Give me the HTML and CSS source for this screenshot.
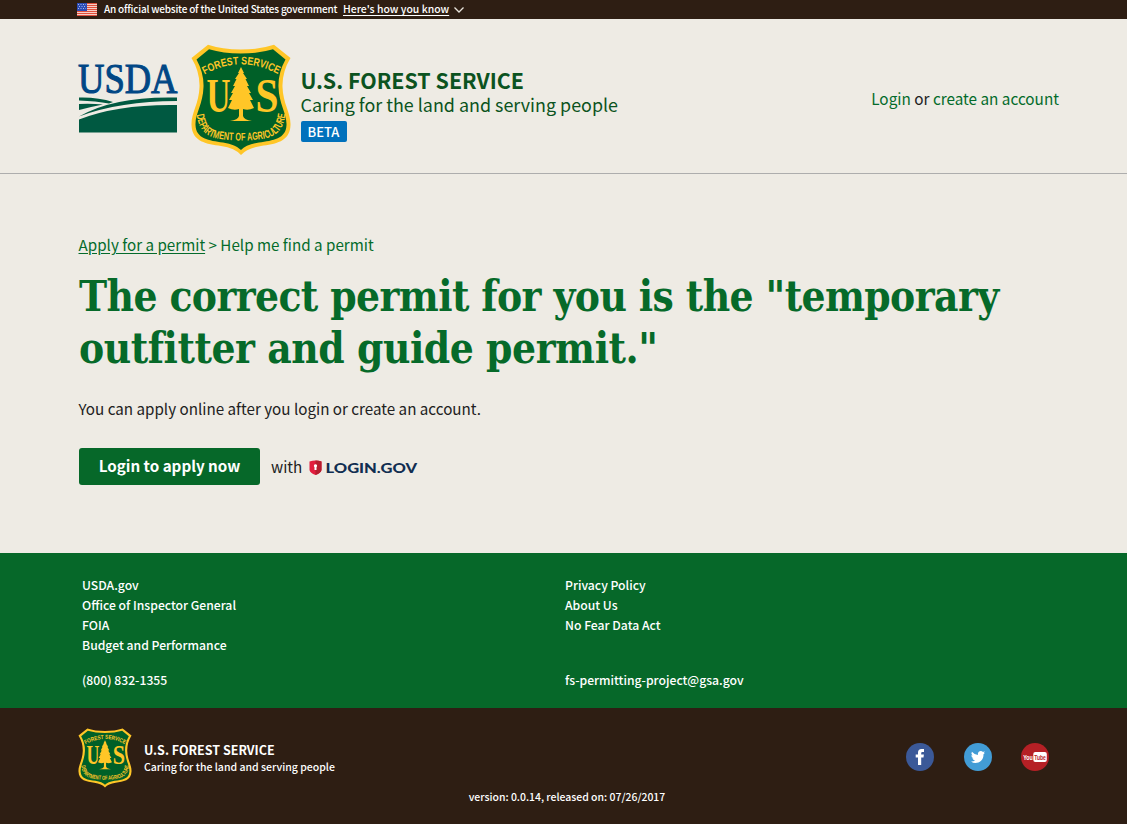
FILE: index.html
```html
<!DOCTYPE html>
<html lang="en">
<head>
<meta charset="utf-8">
<title>U.S. Forest Service permits</title>
<link rel="stylesheet" href="styles.css">
</head>
<body>
<svg class="defs" aria-hidden="true">
  <defs>
    <path id="arc-top" d="M13.500 30.500Q50 10 88.500 31"/>
    <path id="arc-bottom" d="M5.500 70.500Q8 91 26 94.500Q38 96.500 50 96.500Q62 96.500 74 94.500Q92 91 94.500 70.500"/>
    <symbol id="shield" viewBox="0 0 100 112">
      <path fill="#ffc627" d="M17 .8Q31 5.500 50 5.500Q69 5.500 83 .8L99.500 14Q91 28 91.500 43C92 60 100 69 99.500 81C99 98 84 100 70 102Q56 104 50 111Q44 104 30 102C16 100 1 98 .5 81C0 69 8 60 8.500 43Q9 28 .5 14Z"/>
      <path fill="#006028" d="M18 5.300Q32 9.500 50 9.500Q68 9.500 82 5.300L94.500 15.500Q87 29 87.500 43C88 60 96 70 95.500 81C95 95 82 96.500 68 98.500Q55 100.500 50 106Q45 100.500 32 98.500C18 96.500 5 95 4.500 81C4 70 12 60 12.500 43Q13 29 5.500 15.500Z"/>
      <g fill="#ffc627">
        <path d="M50 23L53 29L52 29L56 35L54.500 35L58 42L56 42L60 49L58 49L62 56L59 56L63 64Q57 67 52 65V72Q53 76 61 77H39Q47 76 48 72V65Q43 67 37 64L41 56H38L42 49H40L44 42H42L45.500 35H44L48 29H47Z"/>
        <text class="shield-us" x="15.500" y="68" textLength="24" lengthAdjust="spacingAndGlyphs">U</text>
        <text class="shield-us" x="64.500" y="68" textLength="23" lengthAdjust="spacingAndGlyphs">S</text>
        <text class="shield-arc"><textPath href="#arc-top" textLength="77" lengthAdjust="spacingAndGlyphs">FOREST SERVICE</textPath></text>
        <text class="shield-arc"><textPath href="#arc-bottom" textLength="117" lengthAdjust="spacingAndGlyphs">DEPARTMENT OF AGRICULTURE</textPath></text>
      </g>
    </symbol>
  </defs>
</svg>

<div class="banner">
  <svg class="flag" viewBox="0 0 20 13">
    <path fill="#f7cfc6" d="M0 0h20v13H0z"/>
    <path stroke="#e0503c" stroke-width="1.200" d="M0 .5h20M0 2.500h20M0 4.500h20M0 6.500h20M0 8.500h20M0 10.500h20M0 12.500h20"/>
    <path fill="#2b4bb5" d="M0 0h10v8H0z"/>
    <path stroke="#a9b8ea" stroke-dasharray="1 1.500" d="M1 1.500h8M2 3.500h7M1 5.500h8"/>
  </svg>
  <span class="banner-text">An official website of the United States government</span>
  <a class="banner-link">Here's how you know</a>
  <svg class="chevron" viewBox="0 0 12 8"><path d="M1.500 1.500L6 6L10.500 1.500" fill="none" stroke="#e8e4dc" stroke-width="1.300"/></svg>
</div>

<header class="header">
  <svg class="usda" viewBox="0 0 100 70">
    <text class="usda-text" x="0" y="30" textLength="99.500" lengthAdjust="spacingAndGlyphs">USDA</text>
    <g fill="#005941">
      <path d="M1 34.500Q20 34 35 39L31 40.500Q18 38 1 37.500Z"/>
      <path d="M1 41Q14 40.500 25 41.500Q12 44 1 47Z"/>
      <path d="M1 53.500Q36 33 99 34.500V38Q42 38 1 53.500Z"/>
      <path d="M1 56.500Q40 41 99 42V69.500H1Z"/>
    </g>
  </svg>
  <svg class="header-shield"><use href="#shield"/></svg>
  <div class="brand">
    <div class="brand-name">U.S. FOREST SERVICE</div>
    <div class="brand-tag">Caring for the land and serving people</div>
    <span class="beta">BETA</span>
  </div>
  <div class="account"><a>Login</a> or <a>create an account</a></div>
</header>

<main class="main">
  <nav class="crumbs"><a class="crumb-link">Apply for a permit</a> &gt; Help me find a permit</nav>
  <h1 class="title"><span class="title-first">The correct permit for you is the "temporary</span> <span class="title-second">outfitter and guide permit."</span></h1>
  <p class="lead">You can apply online after you login or create an account.</p>
  <div class="actions">
    <a class="button">Login to apply now</a>
    <span class="with">with</span>
    <svg class="login-gov" viewBox="0 0 109 16">
      <path fill="#e21d3e" d="M.5 1.500Q6.500-.5 12.500 1.500V10Q12 13 6.500 15Q1 13 .5 10Z"/>
      <path fill="#b51d2e" d="M6.500.5Q10 .6 12.500 1.500V10Q12 13 6.500 15Z"/>
      <path fill="#fff" d="M6.500 4.200a1.700 1.700 0 0 1 1 3V10h-2V7.200a1.700 1.700 0 0 1 1-3"/>
      <text class="login-gov-text" x="16.500" y="12.500" textLength="91.500" lengthAdjust="spacingAndGlyphs">LOGIN.GOV</text>
    </svg>
  </div>
</main>

<div class="footer-links">
  <div class="footer-col">
    <a>USDA.gov</a><a>Office of Inspector General</a><a>FOIA</a><a>Budget and Performance</a>
    <span class="contact">(800) 832-1355</span>
  </div>
  <div class="footer-col">
    <a>Privacy Policy</a><a>About Us</a><a>No Fear Data Act</a>
    <span class="contact">fs-permitting-project@gsa.gov</span>
  </div>
</div>

<footer class="footer">
  <div class="footer-row">
    <svg class="footer-shield"><use href="#shield"/></svg>
    <div class="footer-brand">
      <div class="footer-name">U.S. FOREST SERVICE</div>
      <div class="footer-tag">Caring for the land and serving people</div>
    </div>
    <div class="social">
      <svg viewBox="0 0 28 28"><circle cx="14" cy="14" r="14" fill="#3b5998"/><path fill="#fff" d="M12 22v-7.500H9.700V11.500H12V9.500Q12 6 15.500 6H18v3h-1.700Q15.200 9 15.200 10v1.500h2.700l-.4 3h-2.300V22z"/></svg>
      <svg viewBox="0 0 28 28"><circle cx="14" cy="14" r="14" fill="#429cd6"/><path fill="#fff" d="M21 9.800l-1.500 1.500C19.800 17 15.500 20 11.500 20Q9 20 7 18.500q2.500.2 4-1.200q-2-.1-2.700-2h1.200Q7.300 14.500 7.300 12.200l1.200.4Q6.600 10.800 7.900 8.800Q10.300 11.700 13.900 11.900C13.300 8.500 17 7 19 9l1.800-.7-1.100 1.600z"/></svg>
      <svg viewBox="0 0 28 28"><circle cx="14" cy="14" r="14" fill="#b52025"/><rect x="12.300" y="9" width="13.500" height="10" rx="2" fill="#fff"/><text class="yt" x="2.200" y="17.200" textLength="9.600" lengthAdjust="spacingAndGlyphs" fill="#fff">You</text><text class="yt" x="13.200" y="17.200" textLength="11.600" lengthAdjust="spacingAndGlyphs" fill="#b52025">Tube</text></svg>
    </div>
  </div>
  <div class="version">version: 0.0.14, released on: 07/26/2017</div>
</footer>
</body>
</html>
```
FILE: styles.css
```css
* { box-sizing: border-box; }
body {
  margin: 0;
  background: #eeebe4;
  color: #212121;
  font-family: "Noto Sans CJK SC", "Open Sans", sans-serif;
  font-size: 15.200px;
}
svg { overflow: visible; }
.defs { position: absolute; width: 0; height: 0; }
.banner {
  display: flex;
  align-items: center;
  height: 19px;
  padding-left: 77px;
  background: #2e1e13;
  color: #fff;
  font-size: 10px;
  font-weight: 500;
  line-height: 17px;
  white-space: nowrap;
}
.banner span, .banner a { height: 19px; }
.flag { width: 20px; height: 13px; margin: -1px 7px 0 0; }
.banner-text { width: 239px; letter-spacing: -.200px; }
.banner-link { width: 106px; font-size: 10.450px; text-decoration: underline; text-underline-offset: 2px; }
.chevron { width: 12px; height: 8px; margin-left: 4px; }

.header {
  display: flex;
  height: 155px;
  padding: 25px 68px 0 78px;
  border-bottom: 1px solid #adadad;
}
.usda { width: 100px; height: 70px; margin: 19px 13px 0 0; }
.usda-text { font: 43px "Liberation Serif", serif; fill: #004785; stroke: #004785; stroke-width: 1.100px; }
.header-shield { width: 100px; height: 112px; }
.shield-us { font: bold 49px "Liberation Serif", serif; }
.shield-arc { font: bold 11px "Liberation Sans", sans-serif; }
.brand { margin: 24px 0 0 9.500px; color: #0b5320; white-space: nowrap; }
.brand-name { font-size: 21.400px; font-weight: 700; line-height: 24px; }
.brand-tag { font-size: 17.900px; line-height: 24px; }
.beta {
  display: block;
  width: 46px;
  height: 21px;
  margin-top: 5px;
  border-radius: 2px;
  background: #0071bc;
  color: #fff;
  font-size: 13px;
  font-weight: 500;
  line-height: 21px;
  text-align: center;
}
.account { margin: 42px 0 0 auto; font-size: 15.300px; line-height: 24px; }
.account a { color: #046b2b; }

.main { height: 379px; padding: 58px 78px 0 79px; }
.crumbs { margin-left: -.5px; color: #046b2b; line-height: 24px; }
.crumb-link { text-decoration: underline; text-underline-offset: 2px; }
.title {
  margin: 15px 0 0;
  color: #066a29;
  font: bold 42px/52px "DejaVu Serif Condensed", "DejaVu Serif", serif;
  font-stretch: condensed;
  white-space: nowrap;
}
.title span { display: block; }
.title-first { letter-spacing: -.600px; }
.title-second { letter-spacing: -.450px; }
.lead { margin: 20px 0 0 -.5px; line-height: 26px; }
.actions { display: flex; align-items: center; height: 37px; margin-top: 27px; }
.button {
  width: 181px;
  height: 37px;
  border-radius: 3px;
  background: #066829;
  color: #fff;
  font-weight: 700;
  line-height: 35px;
  text-align: center;
}
.with { width: 38px; margin: -2px 0 0 11px; }
.login-gov { width: 109px; height: 16px; margin-top: 3px; }
.login-gov-text { font: 900 13.500px Lato, sans-serif; fill: #112e51; }

.footer-links {
  display: grid;
  grid-template-columns: 483px 1fr;
  height: 155px;
  padding: 22px 0 0 82px;
  background: #066829;
  color: #fff;
  font-size: 12.200px;
  font-weight: 500;
  line-height: 20px;
}
.footer-col { display: flex; flex-direction: column; height: 115px; }
.contact { margin-top: auto; }
.footer {
  height: 116px;
  padding: 20px 78px 0 77.500px;
  background: #2e1e13;
  color: #fff;
}
.footer-row { display: flex; }
.footer-shield { width: 54px; height: 60px; }
.footer-brand { margin: 13px 0 0 12.500px; }
.footer-name { font-size: 12.500px; font-weight: 700; line-height: 17px; }
.footer-tag { font-size: 10.500px; font-weight: 500; line-height: 17px; }
.social { display: flex; gap: 29.500px; margin: 15px 0 0 auto; }
.social svg { width: 28px; height: 28px; }
.yt { font: bold 8px "Liberation Sans", sans-serif; }
.version { margin-left: 7.500px; font-size: 10.450px; font-weight: 500; line-height: 18px; text-align: center; width: 964px; }
```
